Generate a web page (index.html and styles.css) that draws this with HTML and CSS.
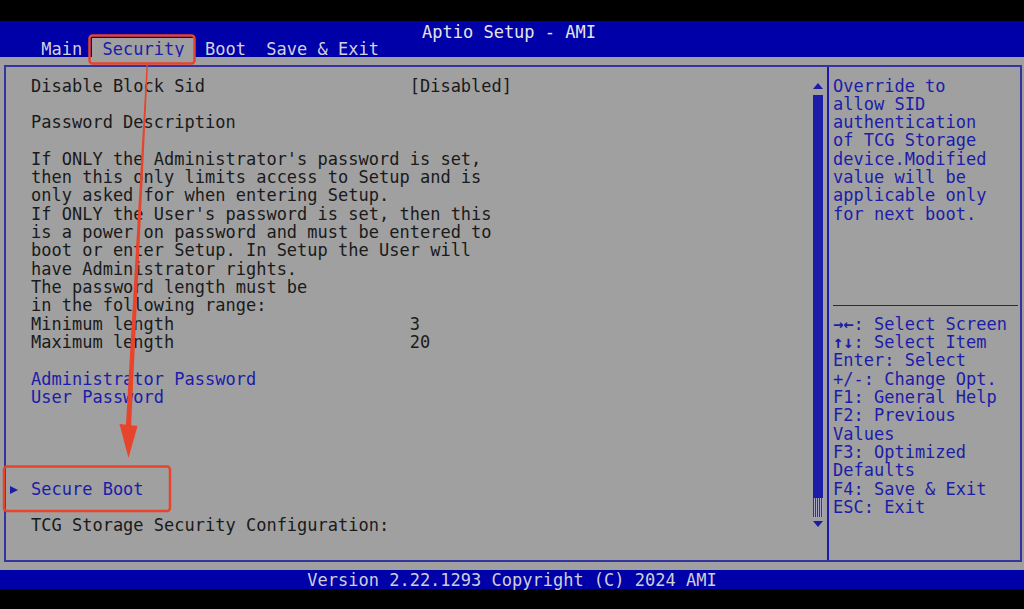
FILE: index.html
```html
<!DOCTYPE html>
<html lang="en">
<head>
<meta charset="utf-8">
<title>Aptio Setup - AMI</title>
<link rel="stylesheet" href="styles.css">
</head>
<body>
<div class="screen">
  <div class="topbar"></div>
  <header class="header">
    <div class="title">Aptio Setup - AMI</div>
    <nav class="tabs">
      <span class="tab">Main</span>
      <span class="tab active">Security</span>
      <span class="tab">Boot</span>
      <span class="tab">Save &amp; Exit</span>
    </nav>
  </header>
  <main class="body">
    <div class="panel">
      <section class="main-col">
        <div class="content">
          <div class="row kv"><span>Disable Block Sid</span><span>[Disabled]</span></div>
          <div class="row"></div>
          <div class="row">Password Description</div>
          <div class="row"></div>
          <div class="row">If ONLY the Administrator's password is set,</div>
          <div class="row">then this only limits access to Setup and is</div>
          <div class="row">only asked for when entering Setup.</div>
          <div class="row">If ONLY the User's password is set, then this</div>
          <div class="row">is a power on password and must be entered to</div>
          <div class="row">boot or enter Setup. In Setup the User will</div>
          <div class="row">have Administrator rights.</div>
          <div class="row">The password length must be</div>
          <div class="row">in the following range:</div>
          <div class="row kv"><span>Minimum length</span><span>3</span></div>
          <div class="row kv"><span>Maximum length</span><span>20</span></div>
          <div class="row"></div>
          <div class="row link">Administrator Password</div>
          <div class="row link">User Password</div>
          <div class="row"></div>
          <div class="row"></div>
          <div class="row"></div>
          <div class="row"></div>
          <div class="row link selected"><span class="marker"></span>Secure Boot</div>
          <div class="row"></div>
          <div class="row">TCG Storage Security Configuration:</div>
        </div>
        <div class="scroll">
          <span class="arrow-up"></span>
          <span class="thumb"></span>
          <span class="hatch"></span>
          <span class="arrow-down"></span>
        </div>
      </section>
      <aside class="help">
        <div class="help-text">
          <div class="row">Override to</div>
          <div class="row">allow SID</div>
          <div class="row">authentication</div>
          <div class="row">of TCG Storage</div>
          <div class="row">device.Modified</div>
          <div class="row">value will be</div>
          <div class="row">applicable only</div>
          <div class="row">for next boot.</div>
        </div>
        <div class="sep"></div>
        <div class="keys">
          <div class="row"><b class="k">&#8594;&#8592;</b>: Select Screen</div>
          <div class="row"><b class="k">&#8593;&#8595;</b>: Select Item</div>
          <div class="row">Enter: Select</div>
          <div class="row">+/-: Change Opt.</div>
          <div class="row">F1: General Help</div>
          <div class="row">F2: Previous</div>
          <div class="row">Values</div>
          <div class="row">F3: Optimized</div>
          <div class="row">Defaults</div>
          <div class="row">F4: Save &amp; Exit</div>
          <div class="row">ESC: Exit</div>
        </div>
      </aside>
    </div>
  </main>
  <footer class="footer">Version 2.22.1293 Copyright (C) 2024 AMI</footer>

  <svg class="annot" width="1024" height="609" viewBox="0 0 1024 609" aria-hidden="true">
    <rect x="89.5" y="35.5" width="105" height="28" rx="3" fill="none" stroke="#e8432b" stroke-width="2.5"/>
    <rect x="4" y="466.5" width="166" height="44.5" rx="3" fill="none" stroke="#e8432b" stroke-width="2.5"/>
    <polygon points="146.6,64 148,64 131,428 125.8,428" fill="#e8432b"/>
    <polygon points="119.5,424 137.5,426 128.5,458" fill="#e8432b"/>
  </svg>
</div>
</body>
</html>
```

FILE: styles.css
```css
:root {
  --lh: 18.33px;
  --blue: #0000a8;
  --gray: #a0a0a0;
  --ink: #1a1a1a;
  --link: #1c1ca8;
}

html, body {
  margin: 0;
  padding: 0;
  background: #000;
}

.screen {
  position: relative;
  width: 1024px;
  height: 609px;
  overflow: hidden;
  display: flex;
  flex-direction: column;
  font-family: "DejaVu Sans Mono", "Liberation Mono", monospace;
  font-size: 17px;
  background: #000;
}

.topbar {
  height: 21px;
  flex: none;
}

.header {
  height: 36px;
  flex: none;
  background: var(--blue);
  display: flex;
  flex-direction: column;
  box-sizing: border-box;
  padding-top: 2px;
}

.title {
  line-height: var(--lh);
  height: var(--lh);
  text-align: center;
  color: #e4e4e4;
  padding-right: 6px;
}

.tabs {
  display: flex;
  padding-left: 31px;
  margin-top: -3px;
  height: 19px;
}

.tab {
  padding: 0 10.23px;
  height: 19px;
  line-height: 22px;
  color: #d2d2de;
  white-space: pre;
}

.tab.active {
  background: var(--gray);
  color: var(--link);
}

.body {
  height: 513px;
  flex: none;
  background: var(--gray);
  box-sizing: border-box;
  padding: 8px 2px 8px 4px;
}

.panel {
  height: 100%;
  box-sizing: border-box;
  border: 2px solid #3434a0;
  display: flex;
}

.main-col {
  flex: 1;
  display: flex;
}

.content {
  flex: 1;
  padding: 9.5px 0 0 25px;
  color: var(--ink);
}

.row {
  height: var(--lh);
  line-height: var(--lh);
  white-space: pre;
}

.kv {
  display: grid;
  grid-template-columns: 37ch auto;
}

.link {
  color: var(--link);
}

.marker {
  display: inline-block;
  width: 0;
  height: 0;
  margin-left: -21px;
  margin-right: 13px;
  border-left: 8px solid var(--link);
  border-top: 4.5px solid transparent;
  border-bottom: 4.5px solid transparent;
  vertical-align: 1px;
}

.scroll {
  width: 10px;
  margin-right: 4px;
  display: flex;
  flex-direction: column;
  align-items: center;
  padding: 16px 0 33px;
}

.arrow-up {
  width: 0;
  height: 0;
  border-left: 5px solid transparent;
  border-right: 5px solid transparent;
  border-bottom: 6px solid var(--link);
}

.thumb {
  flex: 1;
  width: 10px;
  margin-top: 6px;
  background: var(--link);
}

.hatch {
  width: 10px;
  height: 19px;
  background: repeating-linear-gradient(90deg, #3030a8 0 1px, #a8a8c0 1px 2px);
}

.arrow-down {
  margin-top: 4px;
  width: 0;
  height: 0;
  border-left: 5px solid transparent;
  border-right: 5px solid transparent;
  border-top: 6px solid var(--link);
}

.help {
  width: 185px;
  border-left: 2px solid var(--link);
  padding: 9.5px 2px 0 4px;
  color: var(--link);
}

.help-text {
  height: calc(var(--lh) * 12);
}

.sep {
  height: var(--lh);
  display: flex;
  align-items: center;
}

.sep::before {
  content: "";
  flex: 1;
  height: 1.5px;
  background: var(--link);
}

.keys .k {
  font-weight: bold;
}

.footer {
  height: 19px;
  flex: none;
  box-sizing: border-box;
  padding-top: 2px;
  line-height: 17px;
  background: var(--blue);
  color: #cfcfd8;
  text-align: center;
}

.annot {
  position: absolute;
  left: 0;
  top: 0;
  pointer-events: none;
}
```
